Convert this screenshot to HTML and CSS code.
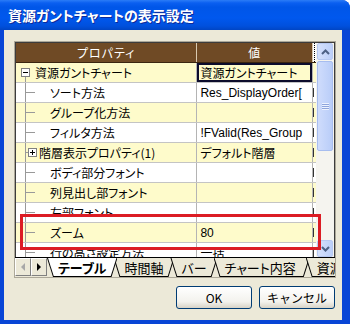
FILE: index.html
```html
<!DOCTYPE html>
<html lang="ja">
<head>
  <meta charset="UTF-8">
  <title>資源ガントチャートの表示設定</title>
  <link rel="stylesheet" href="styles.css">
</head>
<body>

  <div class="window">
    <div class="titlebar">資源ガントチャートの表示設定</div>

    <div class="client">
      <div class="sheet">
        <div class="grid">
          <div class="table">
            <div class="row head">
              <div class="name">プロパティ</div>
              <div class="val">値</div>
              <div class="extra"></div>
            </div>

            <div class="row yellow">
              <div class="name root"><span class="box minus"></span>資源ガントチャート</div>
              <div class="val focus">資源ガントチャート</div>
              <div class="extra"></div>
            </div>
            <div class="row">
              <div class="name child">ソート方法</div>
              <div class="val latin">Res_DisplayOrder[</div>
              <div class="extra"><span class="mark"></span></div>
            </div>
            <div class="row yellow">
              <div class="name child">グループ化方法</div>
              <div class="val"></div>
              <div class="extra"><span class="mark"></span></div>
            </div>
            <div class="row">
              <div class="name child">フィルタ方法</div>
              <div class="val latin">!FValid(Res_Group</div>
              <div class="extra"><span class="mark"></span></div>
            </div>
            <div class="row yellow">
              <div class="name branch"><span class="box plus"></span>階層表示プロパティ(1)</div>
              <div class="val">デフォルト階層</div>
              <div class="extra"><span class="mark"></span></div>
            </div>
            <div class="row">
              <div class="name child">ボディ部分フォント</div>
              <div class="val"></div>
              <div class="extra"><span class="mark"></span></div>
            </div>
            <div class="row yellow">
              <div class="name child">列見出し部フォント</div>
              <div class="val"></div>
              <div class="extra"><span class="mark"></span></div>
            </div>
            <div class="row">
              <div class="name child"><span class="cut">左部フォント</span></div>
              <div class="val"></div>
              <div class="extra"><span class="mark"></span></div>
            </div>
            <div class="row yellow">
              <div class="name child">ズーム</div>
              <div class="val latin">80</div>
              <div class="extra"><span class="mark"></span></div>
            </div>
            <div class="row">
              <div class="name child">行の高さ設定方法</div>
              <div class="val">一括</div>
              <div class="extra"><span class="mark"></span></div>
            </div>
          </div>

          <div class="vscroll">
            <div class="sbtn up"><svg width="9" height="6" viewBox="0 0 9 6"><path d="M1 5 L4.5 1.5 L8 5" fill="none" stroke="#4d6185" stroke-width="2"/></svg></div>
            <div class="thumb"><span class="grip"></span></div>
            <div class="track"></div>
            <div class="sbtn down"><svg width="9" height="6" viewBox="0 0 9 6"><path d="M1 1 L4.5 4.5 L8 1" fill="none" stroke="#4d6185" stroke-width="2"/></svg></div>
          </div>
        </div>

        <div class="tabbar">
          <div class="tabnav"><span class="arrow left"></span></div>
          <div class="tabnav"><span class="arrow right"></span></div>
          <div class="tabs">
            <div class="tab active">テーブル</div>
            <div class="tab">時間軸</div>
            <div class="tab">バー</div>
            <div class="tab">チャート内容</div>
            <div class="tab">資源</div>
          </div>
        </div>
      </div>

      <div class="actions">
        <button>OK</button>
        <button>キャンセル</button>
      </div>
    </div>

    <div class="highlight"></div>
  </div>

</body>
</html>
```

FILE: styles.css
```css
* {
  box-sizing: border-box;
}
body {
  margin: 0;
  background: #fff;
  font-family: "Noto Sans CJK JP", sans-serif;
  font-size: 12px;
  font-feature-settings: "palt";
  color: #000;
}
.window {
  position: relative;
  width: 350px;
  height: 324px;
  display: flex;
  flex-direction: column;
  background: #0845d6;
  border-top-right-radius: 8px;
  overflow: hidden;
}
.titlebar {
  height: 30px;
  padding-left: 8px;
  display: flex;
  align-items: center;
  color: #fff;
  font-weight: bold;
  font-size: 14px;
  text-shadow: 1px 1px 0 #0c2a9a;
  background: linear-gradient(#2b7cf7 0, #0a5ff0 3px, #0056e8 7px, #0058ee 18px, #0050dd 26px, #0045c4 30px);
}
.client {
  flex: 1;
  margin: 0 8px 4px 4px;
  background: #ece9d8;
  display: flex;
  flex-direction: column;
}
.sheet {
  margin: 11px 6px 0 10px;
  border: 1px solid #aca899;
}
.grid {
  height: 215px;
  display: flex;
  border: 1px solid #3c3c3c;
  border-bottom: none;
  background: #fff;
}
.table {
  flex: 1;
  overflow: hidden;
}
.row {
  height: 20px;
  display: flex;
  border-bottom: 1px solid #c4c4c4;
  background: #fff;
}
.row.yellow {
  background: #fefbcb;
}
.row > div {
  display: flex;
  align-items: center;
  white-space: nowrap;
  overflow: hidden;
}
.name {
  width: 182px;
  border-right: 1px solid #b4b4b4;
  background-repeat: no-repeat;
}
.val {
  width: 116px;
  padding-left: 3px;
  border-right: 1px solid #b4b4b4;
}
.extra {
  width: 3px;
}
.latin {
  font-family: "Liberation Sans", "Noto Sans CJK JP", sans-serif;
}
.mark {
  width: 1px;
  height: 9px;
  background: #333;
}
.row.head {
  background: #6f4a25;
  color: #fff;
  border-bottom-color: #3a2510;
}
.row.head .name,
.row.head .val {
  justify-content: center;
  border-right-color: #d9c9b0;
  padding: 0;
  letter-spacing: 1px;
}
.row.head .extra {
  background: repeating-linear-gradient(#000 0 1px, #fff 1px 2px) 1px 0 / 1px 100% no-repeat, #fff;
}
.focus {
  box-shadow: inset 0 0 0 2px #0c0c2c;
}

/* tree */
.box {
  width: 9px;
  height: 9px;
  flex-shrink: 0;
  border: 1px solid #808080;
  background-color: #fff;
  background-repeat: no-repeat;
}
.minus {
  background-image: linear-gradient(#000, #000);
  background-size: 5px 1px;
  background-position: 1px 3px;
}
.plus {
  background-image: linear-gradient(#000, #000), linear-gradient(#000, #000);
  background-size: 5px 1px, 1px 5px;
  background-position: 1px 3px, 3px 1px;
}
.root {
  padding-left: 5px;
  background-image: linear-gradient(#999, #999);
  background-size: 1px 6px;
  background-position: 9px 14px;
}
.root .box {
  margin-right: 5px;
}
.child {
  padding-left: 34px;
  background-image: linear-gradient(#999, #999), linear-gradient(#999, #999);
  background-size: 1px 100%, 10px 1px;
  background-position: 9px 0, 9px 9px;
}
.branch {
  padding-left: 12px;
  background-image: linear-gradient(#999, #999), linear-gradient(#999, #999);
  background-size: 1px 100%, 3px 1px;
  background-position: 9px 0, 9px 9px;
}
.branch .box {
  margin-right: 2px;
}
.name .cut {
  align-self: flex-start;
  height: 14px;
  line-height: 19px;
  overflow: hidden;
}

/* scrollbar */
.vscroll {
  width: 18px;
  flex-shrink: 0;
  display: flex;
  flex-direction: column;
  background: #f5f4ef;
  padding: 0 1px;
}
.sbtn {
  height: 17px;
  display: flex;
  align-items: center;
  justify-content: center;
  border: 1px solid #b7c9f2;
  border-radius: 2px;
  background: linear-gradient(90deg, #d5e1fc, #bccff9);
}
.thumb {
  height: 90px;
  margin-top: 1px;
  border: 1px solid #a7bdef;
  border-radius: 2px;
  background: linear-gradient(90deg, #cfdcfc, #b9cdf8);
  display: flex;
  align-items: center;
  justify-content: center;
}
.grip {
  width: 7px;
  height: 7px;
  background: repeating-linear-gradient(#eef3fe 0 1px, #8ea5dc 1px 2px);
}
.track {
  flex: 1;
}

/* sheet tabs */
.tabbar {
  height: 20px;
  display: flex;
  border-top: 1px solid #000;
  background: #ece9d8;
  overflow: hidden;
}
.tabnav {
  width: 16px;
  height: 18px;
  flex-shrink: 0;
  display: flex;
  align-items: center;
  justify-content: center;
  border: 1px solid;
  border-color: #fff #808080 #808080 #fff;
}
.arrow {
  width: 0;
  height: 0;
  border-top: 4px solid transparent;
  border-bottom: 4px solid transparent;
}
.arrow.left {
  border-right: 4px solid #a8a8a8;
}
.arrow.right {
  border-left: 4px solid #000;
}
.tabs {
  display: flex;
  flex-shrink: 0;
}
.tab {
  position: relative;
  flex-shrink: 0;
  white-space: nowrap;
  height: 19px;
  padding: 0 11px;
  margin-left: -4px;
  display: flex;
  align-items: center;
  font-size: 13px;
  background: #000;
  clip-path: polygon(0 0, 100% 0, calc(100% - 6px) 100%, 6px 100%);
}
.tab::before {
  content: "";
  position: absolute;
  inset: 0 0 1px 0;
  z-index: -1;
  background: #ece9d8;
  clip-path: polygon(1px 0, calc(100% - 1px) 0, calc(100% - 6.7px) 100%, 6.7px 100%);
}
.tab.active {
  z-index: 2;
  font-weight: bold;
  margin-left: 0;
}
.tab.active::before {
  background: #fff;
}
.tab:nth-child(4) {
  padding-right: 14px;
}

/* dialog buttons */
.actions {
  display: flex;
  justify-content: flex-end;
  gap: 7px;
  margin-top: 8px;
  padding-right: 7px;
}
button {
  width: 76px;
  height: 23px;
  font-family: "Noto Sans CJK JP", sans-serif;
  font-size: 12px;
  border: 1px solid #003c74;
  border-radius: 3px;
  background: linear-gradient(#fff, #f3f2ed 70%, #d8d3c6);
  color: #000;
  padding: 0;
}

.highlight {
  position: absolute;
  left: 20px;
  top: 214px;
  width: 301px;
  height: 36px;
  border: 3px solid #dc1c24;
}
```
